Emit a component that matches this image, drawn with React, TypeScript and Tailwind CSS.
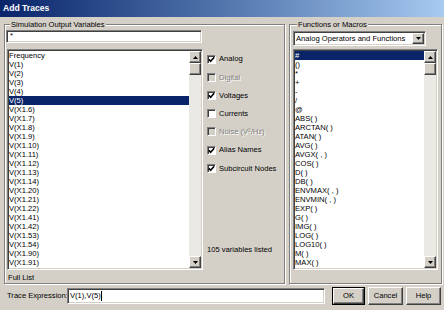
import React from 'react'

const variables = [
  'Frequency', 'V(1)', 'V(2)', 'V(3)', 'V(4)', 'V(5)',
  'V(X1.6)', 'V(X1.7)', 'V(X1.8)', 'V(X1.9)', 'V(X1.10)', 'V(X1.11)',
  'V(X1.12)', 'V(X1.13)', 'V(X1.14)', 'V(X1.20)', 'V(X1.21)', 'V(X1.22)',
  'V(X1.41)', 'V(X1.42)', 'V(X1.53)', 'V(X1.54)', 'V(X1.90)', 'V(X1.91)',
]

const functions = [
  '#', '()', '*', '+', '-', '/', '@', 'ABS( )', 'ARCTAN( )', 'ATAN( )',
  'AVG( )', 'AVGX( , )', 'COS( )', 'D( )', 'DB( )', 'ENVMAX( , )',
  'ENVMIN( , )', 'EXP( )', 'G( )', 'IMG( )', 'LOG( )', 'LOG10( )', 'M( )', 'MAX( )',
]

const raised =
  'border border-t-white border-l-white border-b-[#404040] border-r-[#404040] shadow-[inset_-1px_-1px_0_#808080] bg-[#d4d0c8]'
const sunken =
  'border border-t-[#808080] border-l-[#808080] border-b-white border-r-white shadow-[inset_1px_1px_0_#404040,inset_-1px_-1px_0_#d4d0c8]'

function Arrow({ up }: { up?: boolean }) {
  return (
    <svg width="5" height="3" viewBox="0 0 5 3">
      <path d={up ? 'M2.5 0 L5 3 L0 3 Z' : 'M0 0 L5 0 L2.5 3 Z'} fill="#000" />
    </svg>
  )
}

function ScrollBar() {
  return (
    <div className="w-[12px] h-full flex flex-col bg-[#ebe9e4]">
      <div className={`${raised} h-[12px] flex items-center justify-center`}>
        <Arrow up />
      </div>
      <div className={`${raised} h-[12px]`} />
      <div className="flex-1" />
      <div className={`${raised} h-[12px] flex items-center justify-center`}>
        <Arrow />
      </div>
    </div>
  )
}

function ListBox({ items, selected, width }: { items: string[]; selected: number; width: string }) {
  return (
    <div className={`${sunken} ${width} h-[221px] bg-white p-[1px] flex`}>
      <div className="flex-1 overflow-hidden">
        {items.map((item, i) => (
          <div
            key={item}
            className={`h-[9px] leading-[9px] whitespace-nowrap ${
              i === selected ? 'bg-[#0a246a] text-white' : 'text-black'
            }`}
          >
            {item}
          </div>
        ))}
      </div>
      <ScrollBar />
    </div>
  )
}

function Check({ label, checked, disabled }: { label: string; checked?: boolean; disabled?: boolean }) {
  return (
    <div className="flex items-center h-[18.2px]">
      <span
        className={`w-[9px] h-[9px] flex items-center justify-center border border-t-[#808080] border-l-[#808080] border-b-white border-r-white shadow-[inset_1px_1px_0_#404040] ${
          disabled ? 'bg-[#d4d0c8]' : 'bg-white'
        }`}
      >
        {checked && (
          <svg width="7" height="7" viewBox="0 0 7 7">
            <path d="M0.8 3.2 L2.6 5.2 L6.2 1.2" stroke="#000" strokeWidth="1.6" fill="none" />
          </svg>
        )}
      </span>
      <span className={`ml-[3px] ${disabled ? 'text-[#808080] [text-shadow:1px_1px_0_#fff]' : ''}`}>
        {label}
      </span>
    </div>
  )
}

function Button({ label, isDefault }: { label: string; isDefault?: boolean }) {
  return (
    <div className={isDefault ? 'border border-black' : ''}>
      <div
        className={`${raised} ${
          isDefault ? 'w-[31px] h-[16px]' : 'w-[35px] h-[18px]'
        } flex items-center justify-center`}
      >
        {label}
      </div>
    </div>
  )
}

export default function App() {
  return (
    <div className="w-[444px] h-[310px] bg-[#d4d0c8] flex flex-col font-['Liberation_Sans',Arial,sans-serif] text-[7.6px] text-black overflow-hidden">
      {/* Title bar */}
      <div className="h-[17px] bg-gradient-to-r from-[#0a246a] to-[#a6caf0] flex items-center pl-[3px]">
        <span className="text-white font-bold text-[8.6px]">Add Traces</span>
      </div>

      <div className="flex mt-[3px] ml-[4px] gap-[4px]">
        {/* Simulation Output Variables */}
        <fieldset className="w-[281px] h-[264px] border border-[#808080] shadow-[inset_1px_1px_0_#fff,1px_1px_0_#fff] pl-[1px] flex flex-col">
          <legend className="ml-[4px] px-[1px] leading-[9px] bg-[#d4d0c8]">Simulation Output Variables</legend>
          <div className={`${sunken} mt-[1px] w-[196px] h-[13px] bg-white pl-[3px] leading-[9px]`}>*</div>
          <div className="flex mt-[6px]">
            <div className="ml-[1px]">
              <ListBox items={variables} selected={5} width="w-[196px]" />
            </div>
            <div className="ml-[4px] h-[221px] flex flex-col">
              <div className="mt-[1px]">
                <Check label="Analog" checked />
                <Check label="Digital" disabled />
                <Check label="Voltages" checked />
                <Check label="Currents" />
                <Check label="Noise (V²/Hz)" disabled />
                <Check label="Alias Names" checked />
                <Check label="Subcircuit Nodes" checked />
              </div>
              <div className="mt-auto mb-[16px] leading-[9px]">105 variables listed</div>
            </div>
          </div>
          <div className="mt-[3px] ml-[2px] leading-[9px]">Full List</div>
        </fieldset>

        {/* Functions or Macros */}
        <fieldset className="w-[153px] h-[264px] border border-[#808080] shadow-[inset_1px_1px_0_#fff,1px_1px_0_#fff] pl-[3px] flex flex-col">
          <legend className="ml-[4px] px-[1px] leading-[9px] bg-[#d4d0c8]">Functions or Macros</legend>
          <div className={`${sunken} mt-[2px] w-[133px] h-[15px] bg-white flex items-center pl-[2px] pr-[1px]`}>
            <span className="flex-1 whitespace-nowrap">Analog Operators and Functions</span>
            <div className={`${raised} w-[12px] h-[11px] flex items-center justify-center`}>
              <Arrow />
            </div>
          </div>
          <div className="mt-[3px]">
            <ListBox items={functions} selected={0} width="w-[145px]" />
          </div>
        </fieldset>
      </div>

      {/* Trace expression row */}
      <div className="flex items-center mt-[3px] pl-[7px]">
        <span className="w-[60px] whitespace-nowrap">Trace Expression:</span>
        <div className={`${sunken} w-[258px] h-[16px] bg-white flex items-center pl-[2px]`}>
          <span>V(1),V(5)</span>
          <span className="w-px h-[10px] bg-black" />
        </div>
        <div className="ml-[7px] flex gap-[3px] items-center">
          <Button label="OK" isDefault />
          <Button label="Cancel" />
          <Button label="Help" />
        </div>
      </div>
    </div>
  )
}
